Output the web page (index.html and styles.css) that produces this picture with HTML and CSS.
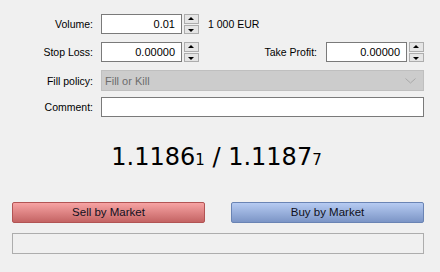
FILE: index.html
```html
<!DOCTYPE html>
<html>
<head>
<meta charset="utf-8">
<link rel="stylesheet" href="styles.css">
</head>
<body>
<div id="order">
	<div class="row">
		<span class="label">Volume:</span>
		<div class="spin">
			<div class="field">0.01</div>
			<div class="arrows"><span class="up"></span><span class="down"></span></div>
		</div>
		<span class="note">1 000 EUR</span>
	</div>
	<div class="row">
		<span class="label">Stop Loss:</span>
		<div class="spin">
			<div class="field">0.00000</div>
			<div class="arrows"><span class="up"></span><span class="down"></span></div>
		</div>
		<span class="label tp">Take Profit:</span>
		<div class="spin">
			<div class="field">0.00000</div>
			<div class="arrows"><span class="up"></span><span class="down"></span></div>
		</div>
	</div>
	<div class="row fill">
		<span class="label">Fill policy:</span>
		<div class="select">
			<span>Fill or Kill</span>
			<svg width="11" height="6" viewBox="0 0 11 6"><path d="M0.5 0.5 L5.5 5 L10.5 0.5" fill="none" stroke="#a8a8a8" stroke-width="1"/></svg>
		</div>
	</div>
	<div class="row">
		<span class="label">Comment:</span>
		<div class="text"></div>
	</div>

	<div id="price">1.1186<small>1</small> / 1.1187<small>7</small></div>

	<div id="buttons">
		<div class="btn sell">Sell by Market</div>
		<div class="btn buy">Buy by Market</div>
	</div>
	<div id="progress"></div>
</div>
</body>
</html>
```
FILE: styles.css
```css
body{
	margin: 0;
	background-color: #f0f0f0;
	font-family: "Liberation Sans", Arial, sans-serif;
	font-size: 10.5px;
	color: #000;
}
#order{
	padding: 14px 16px 0 12px;
}
.row{
	display: flex;
	align-items: center;
	height: 20px;
	margin-bottom: 8px;
}
.row.fill{
	height: 21px;
	margin-bottom: 6px;
}
.label{
	width: 81px;
	text-align: right;
	margin-right: 8px;
}
.label.tp{
	width: auto;
	margin-left: auto;
	margin-right: 9px;
}
.spin{
	display: flex;
	height: 20px;
}
.field{
	box-sizing: border-box;
	width: 81px;
	height: 20px;
	border: 1px solid #7a7a7a;
	background: #fff;
	text-align: right;
	font-size: 11px;
	line-height: 18px;
	padding-right: 6px;
}
.arrows{
	box-sizing: border-box;
	width: 15px;
	height: 20px;
	margin-left: 2px;
	display: flex;
	flex-direction: column;
	gap: 1px;
}
.arrows span{
	flex: 1;
	background: #e5e5e5;
	border: 1px solid #adadad;
	position: relative;
}
.arrows span:after{
	content: "";
	position: absolute;
	left: 3px;
	border-left: 3px solid transparent;
	border-right: 3px solid transparent;
}
.arrows .up:after{
	top: 2px;
	border-bottom: 3px solid #000;
}
.arrows .down:after{
	top: 3px;
	border-top: 3px solid #000;
}
.note{
	margin-left: 9px;
}
.select{
	box-sizing: border-box;
	flex: 1;
	height: 21px;
	background: #cccccc;
	border: 1px solid #bfbfbf;
	color: #6d6d6d;
	display: flex;
	align-items: center;
	justify-content: space-between;
	padding: 0 7px 0 3px;
	font-size: 11px;
}
.text{
	box-sizing: border-box;
	flex: 1;
	height: 20px;
	border: 1px solid #7a7a7a;
	background: #fff;
}
#price{
	text-align: center;
	font-family: "DejaVu Sans", sans-serif;
	font-size: 24px;
	line-height: 28px;
	margin-top: 26px;
	height: 59px;
	padding-right: 3px;
}
#price small{
	font-size: 15px;
}
#buttons{
	display: flex;
	gap: 26px;
}
.btn{
	flex: 1;
	height: 21px;
	box-sizing: border-box;
	text-align: center;
	line-height: 19px;
	border-radius: 2px;
	font-size: 11.5px;
	color: #101020;
}
.sell{
	background: linear-gradient(#f7a3a3, #c46464);
	border: 1px solid #b25454;
}
.buy{
	background: linear-gradient(#b6cbf2, #7c95c6);
	border: 1px solid #6a84b4;
}
#progress{
	margin-top: 10px;
	height: 21px;
	box-sizing: border-box;
	border: 1px solid #adadad;
}
```
